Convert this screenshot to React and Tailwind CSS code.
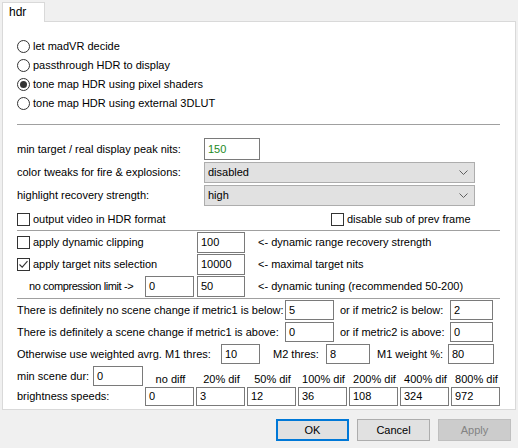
function Radio({ checked, children }) {
  return (
    <div className="flex h-[19px] items-center gap-[3px]">
      <span className="flex h-[13px] w-[13px] items-center justify-center rounded-full border border-[#333333] bg-white">
        {checked && <span className="h-[7px] w-[7px] rounded-full bg-[#333333]" />}
      </span>
      <span>{children}</span>
    </div>
  )
}

function Check({ checked }) {
  return (
    <span className="flex h-[13px] w-[13px] shrink-0 items-center justify-center border border-[#333333] bg-white">
      {checked && (
        <svg width="11" height="11" viewBox="0 0 11 11" fill="none">
          <path d="M1.5 5.5 L4.2 8.2 L9.5 2.2" stroke="#333333" strokeWidth="1.1" />
        </svg>
      )}
    </span>
  )
}

function Box({ w, children, green }) {
  return (
    <div
      className={`flex h-full shrink-0 items-center border border-[#7a7a7a] bg-white px-[3px] ${w} ${
        green ? 'text-[#1e8a1e]' : ''
      }`}
    >
      {children}
    </div>
  )
}

function Drop({ children }) {
  return (
    <div className="flex h-[21px] w-[271px] items-center justify-between border border-[#adadad] bg-[#e1e1e1] pl-[3px] pr-[6px]">
      <span>{children}</span>
      <svg width="9" height="5" viewBox="0 0 9 5" fill="none">
        <path d="M0.5 0.5 L4.5 4.5 L8.5 0.5" stroke="#606060" strokeWidth="1" />
      </svg>
    </div>
  )
}

function Sep({ mt }) {
  return <div className={`h-px w-[483px] bg-[#a0a0a0] ${mt}`} />
}

function Btn({ children, primary, disabled }) {
  return (
    <div
      className={`flex h-[22px] w-[73px] items-center justify-center ${
        primary
          ? 'border-2 border-[#0078d7] bg-[#e1e1e1]'
          : disabled
          ? 'border border-[#bfbfbf] bg-[#cccccc] text-[#838383]'
          : 'border border-[#adadad] bg-[#e1e1e1]'
      }`}
    >
      {children}
    </div>
  )
}

const speeds = ['0', '3', '12', '36', '108', '324', '972']
const diffs = ['no diff', '20% dif', '50% dif', '100% dif', '200% dif', '400% dif', '800% dif']

export default function App() {
  return (
    <div
      className="h-[448px] w-[518px] overflow-hidden bg-[#f0f0f0] text-[11px] leading-[13px] text-black"
      style={{ fontFamily: '"Liberation Sans", Arial, sans-serif' }}
    >
      {/* tab strip */}
      <div className="flex h-[21px] items-end pl-[2px]">
        <div className="relative z-10 -mb-px flex h-[20px] w-[43px] items-center border border-b-0 border-[#d9d9d9] bg-white pl-[6px] text-[12px]">
          hdr
        </div>
      </div>

      <div className="mx-[2px] h-[389px] border border-[#d9d9d9] bg-white pl-[14px] pt-[15px]">
        <Radio>let madVR decide</Radio>
        <Radio>passthrough HDR to display</Radio>
        <Radio checked>tone map HDR using pixel shaders</Radio>
        <Radio>tone map HDR using external 3DLUT</Radio>

        <Sep mt="mt-[11px]" />

        <div className="mt-[13px] flex h-[22px] items-center">
          <span className="w-[187px]">min target / real display peak nits:</span>
          <Box w="w-[56px]" green>150</Box>
        </div>
        <div className="mt-[2px] flex h-[21px] items-center">
          <span className="w-[187px]">color tweaks for fire &amp; explosions:</span>
          <Drop>disabled</Drop>
        </div>
        <div className="mt-[2px] flex h-[21px] items-center">
          <span className="w-[187px]">highlight recovery strength:</span>
          <Drop>high</Drop>
        </div>

        <div className="mt-[5px] flex h-[16px] items-center">
          <span className="flex w-[314px] items-center gap-[3px]">
            <Check />
            output video in HDR format
          </span>
          <span className="flex items-center gap-[3px]">
            <Check />
            disable sub of prev frame
          </span>
        </div>

        <Sep mt="mt-[3px]" />

        <div className="mt-[1px] flex h-[21px] items-center">
          <span className="flex w-[180px] items-center gap-[3px]">
            <Check />
            apply dynamic clipping
          </span>
          <Box w="w-[48px]">100</Box>
          <span className="ml-[13px]">&lt;- dynamic range recovery strength</span>
        </div>
        <div className="mt-[1px] flex h-[21px] items-center">
          <span className="flex w-[180px] items-center gap-[3px]">
            <Check checked />
            apply target nits selection
          </span>
          <Box w="w-[48px]">10000</Box>
          <span className="ml-[13px]">&lt;- maximal target nits</span>
        </div>
        <div className="mt-[1px] flex h-[21px] items-center">
          <span className="w-[128px] whitespace-nowrap pl-[12px] tracking-[-0.4px]">no compression limit -&gt;</span>
          <Box w="w-[49px]">0</Box>
          <div className="ml-[3px] h-full">
            <Box w="w-[48px]">50</Box>
          </div>
          <span className="ml-[13px]">&lt;- dynamic tuning (recommended 50-200)</span>
        </div>

        <Sep mt="mt-[1px]" />

        <div className="mt-[1px] flex h-[20px] items-center">
          <span className="w-[268px]">There is definitely no scene change if metric1 is below:</span>
          <Box w="w-[49px]">5</Box>
          <span className="w-[116px] pl-[6px]">or if metric2 is below:</span>
          <Box w="w-[43px]">2</Box>
        </div>
        <div className="mt-[2px] flex h-[20px] items-center">
          <span className="w-[268px]">There is definitely a scene change if metric1 is above:</span>
          <Box w="w-[49px]">0</Box>
          <span className="w-[116px] pl-[6px]">or if metric2 is above:</span>
          <Box w="w-[43px]">0</Box>
        </div>
        <div className="mt-[2px] flex h-[20px] items-center">
          <span className="w-[204px]">Otherwise use weighted avrg. M1 thres:</span>
          <Box w="w-[39px]">10</Box>
          <span className="w-[66px] pl-[13px]">M2 thres:</span>
          <Box w="w-[44px]">8</Box>
          <span className="w-[78px] pl-[7px]">M1 weight %:</span>
          <Box w="w-[46px]">80</Box>
        </div>

        <div className="mt-[2px] flex h-[20px] items-center">
          <span className="w-[76px]">min scene dur:</span>
          <Box w="w-[50px]">0</Box>
          <div className="ml-[2px] flex h-full items-end">
            {diffs.map((d) => (
              <span key={d} className="w-[51px] text-center">
                {d}
              </span>
            ))}
          </div>
        </div>
        <div className="mt-[1px] flex h-[19px] items-center">
          <span className="w-[128px]">brightness speeds:</span>
          <div className="flex h-full gap-[2px]">
            {speeds.map((s) => (
              <Box key={s} w="w-[49px]">
                {s}
              </Box>
            ))}
          </div>
        </div>
      </div>

      <div className="mt-[9px] flex justify-end gap-[8px] pr-[7px]">
        <Btn primary>OK</Btn>
        <Btn>Cancel</Btn>
        <Btn disabled>Apply</Btn>
      </div>
    </div>
  )
}
